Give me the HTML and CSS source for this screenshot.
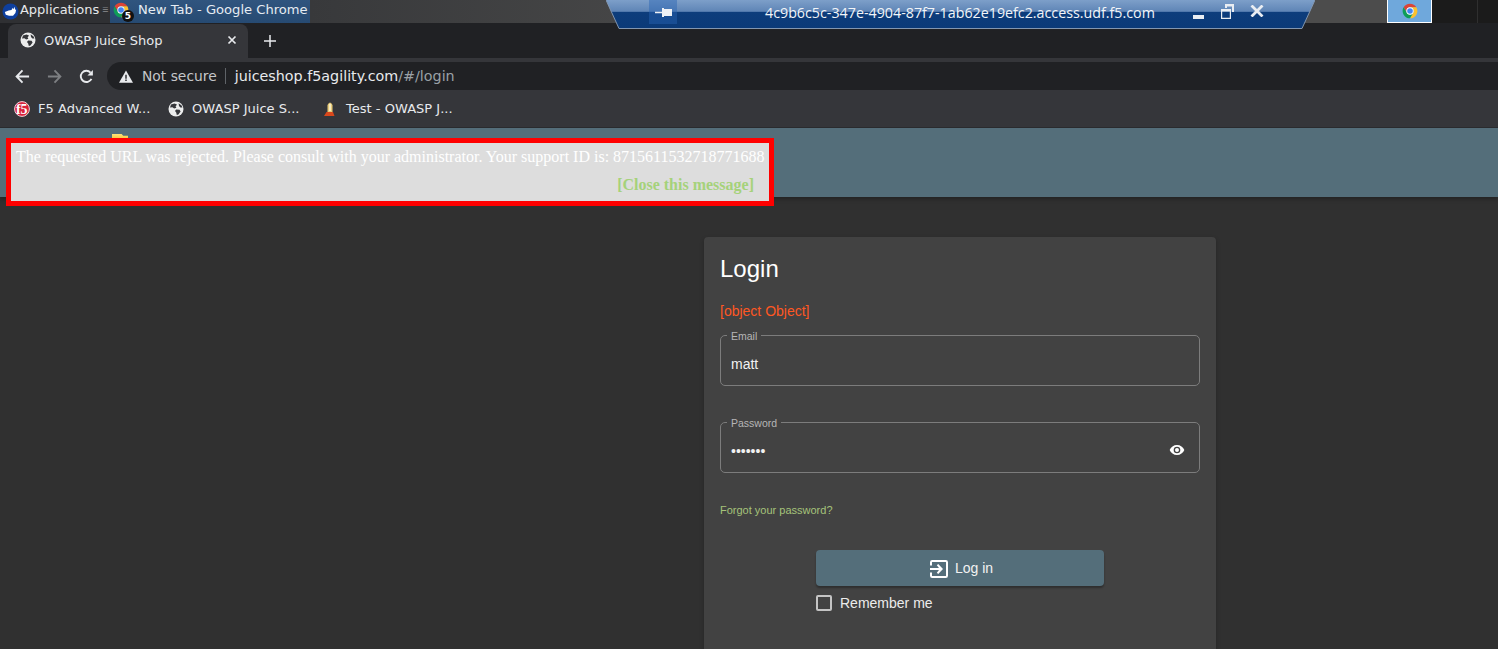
FILE: index.html
```html
<!DOCTYPE html>
<html lang="en">
<head>
<meta charset="utf-8">
<title>OWASP Juice Shop</title>
<link rel="stylesheet" href="styles.css">
</head>
<body>
<svg class="defs" width="0" height="0" aria-hidden="true">
  <defs>
    <symbol id="globe" viewBox="0 0 16 16">
      <circle cx="8" cy="8" r="7.5" fill="#eceded"/>
      <path d="M3 3.500 6.500 2.600 9 3.600 7.600 5.400 8.400 6.800 6.200 7.600 4.400 6.200 2 6.400ZM8.200 8.600 11.600 8.800 12.600 10.600 10.400 13.600 8.800 14 8.200 11.400 7 10ZM10.600 2.200 13.600 4.400 14.400 6.600 12.400 6.600 11 5Z" fill="#35363a"/>
    </symbol>
    <symbol id="chrome" viewBox="0 0 24 24">
      <path d="M2.470 6.500A11 11 0 0 1 21.530 6.500H12A5.500 5.500 0 0 0 7.240 14.750Z" fill="#db4437"/>
      <path d="M21.530 6.500A11 11 0 0 1 12 23L16.760 14.750A5.500 5.500 0 0 0 12 6.500Z" fill="#fbc02d"/>
      <path d="M12 23A11 11 0 0 1 2.470 6.500L7.240 14.750A5.500 5.500 0 0 0 16.760 14.750Z" fill="#0f9d58"/>
      <circle cx="12" cy="12" r="5.500" fill="#fff"/>
      <circle cx="12" cy="12" r="4.200" fill="#4285f4"/>
    </symbol>
  </defs>
</svg>

<header class="taskbar">
  <div class="app-menu">
    <svg class="xfce" viewBox="0 0 18 18" aria-hidden="true">
      <circle cx="9" cy="9" r="8.500" fill="#0e3f9e"/>
      <path d="M3 9.500 7 8l3-.6 1.500-2.400.6 1.600 1.300-2.600.4 3 1.200.2-.8 3.400-2.500 3H7.500L4 12.500Z" fill="#fff"/>
    </svg>
    <span class="app-label">Applications</span>
    <span class="menu-sep">☰</span>
  </div>
  <div class="task-active">
    <span class="task-icon">
      <svg class="task-chrome" aria-hidden="true"><use href="#chrome"/></svg>
      <span class="task-badge">5</span>
    </span>
    <span class="task-label">New Tab - Google Chrome</span>
  </div>
  <div class="task-rest">
    <div class="pinned"><svg class="pinned-chrome" aria-hidden="true"><use href="#chrome"/></svg></div>
    <div class="tray-cell"></div>
    <div class="tray-cell tray-last"></div>
  </div>
</header>

<div class="tabstrip">
  <div class="tab">
    <svg class="favicon" aria-hidden="true"><use href="#globe"/></svg>
    <span class="tab-title">OWASP Juice Shop</span>
    <svg class="tab-close" viewBox="0 0 10 10" aria-hidden="true"><path d="M1.500 1.500 8.500 8.500M8.500 1.500 1.500 8.500" stroke="#e8eaed" stroke-width="1.700"/></svg>
  </div>
  <svg class="tab-new" viewBox="0 0 12 12" aria-hidden="true"><path d="M6 0V12M0 6H12" stroke="#e8eaed" stroke-width="1.500"/></svg>
</div>

<div class="toolbar">
  <svg class="nav-icon" viewBox="0 0 16 16" aria-hidden="true"><path d="M15 8H2M8 1.500 1.700 8 8 14.500" fill="none" stroke="#e8eaed" stroke-width="2"/></svg>
  <svg class="nav-icon" viewBox="0 0 16 16" aria-hidden="true"><path d="M1 8H14M8 1.500 14.300 8 8 14.500" fill="none" stroke="#7d7f82" stroke-width="2"/></svg>
  <svg class="nav-icon" viewBox="0 0 16 16" aria-hidden="true"><path d="M13.300 10.500A6 6 0 1 1 12.300 3.800" fill="none" stroke="#e8eaed" stroke-width="2"/><path d="M14.800 1V6.800H9Z" fill="#e8eaed"/></svg>
  <div class="omnibox">
    <svg class="warn" viewBox="0 0 16 14" aria-hidden="true"><path d="M8 0 16 14H0Z" fill="#e8eaed"/><path d="M7.200 5H8.800V9.500H7.200ZM7.200 10.500H8.800V12H7.200Z" fill="#202124"/></svg>
    <span class="not-secure">Not secure</span>
    <span class="omni-sep"></span>
    <span class="url">juiceshop.f5agility.com<span class="url-path">/#/login</span></span>
  </div>
</div>

<nav class="bookmarks">
  <div class="bookmark">
    <svg class="favicon" viewBox="0 0 16 16" aria-hidden="true">
      <circle cx="8" cy="8" r="7.400" fill="#d8213b" stroke="#f3d5da" stroke-width="1"/>
      <text x="7.800" y="12.500" text-anchor="middle" class="f5-mark">f5</text>
    </svg>
    <span>F5 Advanced W...</span>
  </div>
  <div class="bookmark">
    <svg class="favicon" aria-hidden="true"><use href="#globe"/></svg>
    <span>OWASP Juice S...</span>
  </div>
  <div class="bookmark">
    <svg class="favicon" viewBox="0 0 16 16" aria-hidden="true">
      <path d="M5.500 4Q8 -1 10.500 4V11H5.500Z" fill="#e8cb7a"/>
      <path d="M7 3H9V10H7Z" fill="#f8ecc0"/>
      <path d="M4.500 11H11L12.500 15H2Z" fill="#d9481c"/>
    </svg>
    <span>Test - OWASP J...</span>
  </div>
</nav>

<div class="page">
  <div class="app-header"></div>
  <main class="content">
    <section class="login-card">
      <h1>Login</h1>
      <p class="error">[object Object]</p>
      <div class="field">
        <span class="field-label">Email</span>
        <span class="field-value">matt</span>
      </div>
      <div class="field field-password">
        <span class="field-label">Password</span>
        <span class="field-value">•••••••</span>
        <svg class="eye" viewBox="0 0 24 24" aria-hidden="true"><path d="M12 4.500C7 4.500 2.700 7.600 1 12c1.700 4.400 6 7.500 11 7.500s9.300-3.100 11-7.500c-1.700-4.400-6-7.500-11-7.500ZM12 17a5 5 0 1 1 0-10 5 5 0 0 1 0 10Zm0-8a3 3 0 1 0 0 6 3 3 0 0 0 0-6Z" fill="#fff"/></svg>
      </div>
      <a class="forgot">Forgot your password?</a>
      <div class="actions">
        <button class="login-btn" type="button">
          <svg class="login-icon" viewBox="0 0 18 18" aria-hidden="true"><path d="M1 5.500V2.200C1 1.500 1.500 1 2.200 1H15.800C16.500 1 17 1.500 17 2.200V15.800C17 16.500 16.500 17 15.800 17H2.200C1.500 17 1 16.500 1 15.800V12.500" fill="none" stroke="#fff" stroke-width="2"/><path d="M0 8H9L6.800 5.300 8.200 4 13 9 8.200 14 6.800 12.700 9 10H0Z" fill="#fff"/></svg>
          <span>Log in</span>
        </button>
        <label class="remember">
          <span class="checkbox"></span>
          <span>Remember me</span>
        </label>
      </div>
    </section>
  </main>
</div>

<div class="remote-bar">
  <svg class="remote-shape" viewBox="0 0 709 29" preserveAspectRatio="none" aria-hidden="true">
    <defs>
      <linearGradient id="remote-grad" x1="0" y1="0" x2="0" y2="1">
        <stop offset="0" stop-color="#7d9fc9"/>
        <stop offset=".4" stop-color="#5f85b6"/>
        <stop offset=".42" stop-color="#0d3d7c"/>
        <stop offset="1" stop-color="#0b3a78"/>
      </linearGradient>
    </defs>
    <path d="M0 0H709L696 28.500H13Z" fill="url(#remote-grad)"/>
    <path d="M0 0 13 28.500H696L709 0" fill="none" stroke="#8296b0" stroke-width="1"/>
  </svg>
  <div class="pin">
    <svg viewBox="0 0 17 9" aria-hidden="true"><path d="M0 3.700H7V0H9V1H17V8H9V9H7V5.300H0Z" fill="#eef1f5"/></svg>
  </div>
  <span class="remote-title">4c9b6c5c-347e-4904-87f7-1ab62e19efc2.access.udf.f5.com</span>
  <svg class="rc-min" viewBox="0 0 11 4" aria-hidden="true"><path d="M0 0H11V4H0Z" fill="#e9edf2"/></svg>
  <svg class="rc-restore" viewBox="0 0 13 15" aria-hidden="true"><path d="M4 0H13V8H11V2.500H6V4H4ZM0 5H10V15H0ZM1.200 7.500V13.800H8.800V7.500Z" fill="#e9edf2"/></svg>
  <svg class="rc-close" viewBox="0 0 14 12" aria-hidden="true"><path d="M1.500 .5 12.500 11.500M12.500 .5 1.500 11.500" stroke="#e9edf2" stroke-width="2.800"/></svg>
</div>

<div class="folder-peek"></div>

<aside class="block-msg">
  <p class="block-text">The requested URL was rejected. Please consult with your administrator. Your support ID is: 8715611532718771688</p>
  <p class="block-close">[Close this message]</p>
</aside>
</body>
</html>
```
FILE: styles.css
```css
* { box-sizing: border-box; }
html, body { margin: 0; height: 100%; }
body {
  width: 1498px;
  height: 649px;
  overflow: hidden;
  background: #303030;
  font-family: "DejaVu Sans", sans-serif;
  position: relative;
}
.defs { position: absolute; }

/* desktop panel */
.taskbar {
  height: 23px;
  display: flex;
  background: #2f3033;
  color: #e6e8ea;
  font-size: 13px;
}
.app-menu {
  width: 110px;
  display: flex;
  align-items: center;
  padding: 0 0 4px 2px;
  white-space: nowrap;
}
.xfce { width: 17px; height: 17px; margin: 3px 1px 0 0; flex: none; }
.app-label { letter-spacing: -.02px; }
.menu-sep { margin-left: 3px; color: #8b8d90; font-size: 7px; }
.task-active {
  width: 200px;
  display: flex;
  align-items: center;
  padding-bottom: 4px;
  background: linear-gradient(#30557f, #264a72);
  white-space: nowrap;
  color: #e6ecf2;
}
.task-label { font-size: 13.100px; }
.task-icon { position: relative; width: 28px; height: 19px; flex: none; }
.task-chrome {
  position: absolute;
  left: 3px;
  top: 2px;
  width: 16px;
  height: 16px;
}
.task-badge {
  position: absolute;
  left: 12px;
  top: 10px;
  width: 12px;
  height: 12px;
  border-radius: 50%;
  background: #111;
  color: #fff;
  font-size: 9px;
  font-weight: 700;
  line-height: 12px;
  text-align: center;
}
.task-rest {
  flex: 1;
  display: flex;
  align-items: flex-start;
  justify-content: flex-end;
  height: 23px;
  background: linear-gradient(90deg, #38393b 0, #4c4c4c 40%, #4c4c4c 100%);
}
.pinned {
  width: 45px;
  height: 23px;
  background: #6fa8dc;
  border: 1px solid #fff;
  border-top: 0;
  display: flex;
  align-items: center;
  justify-content: center;
}
.pinned-chrome { width: 16px; height: 16px; }
.tray-cell { width: 46px; height: 23px; background: #1b1b1b; border-right: 1px solid #2f2f2f; }
.tray-last { width: 20px; border-right: 0; }

/* chrome */
.tabstrip {
  height: 35px;
  display: flex;
  align-items: flex-end;
  padding-left: 8px;
  background: #202124;
  color: #e8eaed;
}
.tab {
  width: 240px;
  height: 34px;
  display: flex;
  align-items: center;
  padding: 0 11px 2px 12px;
  background: #35363a;
  border-radius: 8px 8px 0 0;
  font-size: 13px;
}
.favicon { width: 16px; height: 16px; flex: none; }
.tab-title { flex: 1; margin-left: 8px; letter-spacing: -.05px; }
.tab-close { width: 10px; height: 10px; }
.tab-new { width: 12px; height: 12px; margin: 0 0 11px 16px; }

.toolbar {
  height: 32px;
  display: flex;
  align-items: center;
  background: #35363a;
  padding: 4px 0 0 15px;
}
.nav-icon { width: 15px; height: 15px; margin-right: 17px; flex: none; }
.omnibox {
  flex: 1;
  height: 28px;
  margin-left: -4px;
  border-radius: 14px 0 0 14px;
  background: #202124;
  display: flex;
  align-items: center;
  padding-left: 12px;
  color: #e8eaed;
}
.warn { width: 14px; height: 13px; flex: none; }
.not-secure { margin-left: 9px; color: #c4c6c9; font-size: 13.850px; }
.omni-sep { width: 1px; height: 16px; background: #5f6368; margin: 0 9px 0 8px; }
.url { font-size: 14.300px; }
.url-path { color: #9aa0a6; }

.bookmarks {
  height: 38px;
  display: flex;
  align-items: center;
  padding: 0 0 0 14px;
  background: #35363a;
  color: #e8eaed;
  font-size: 13.050px;
  border-bottom: 1px solid #2a2b2e;
}
.bookmark {
  width: 154px;
  display: flex;
  align-items: center;
  gap: 8px;
  white-space: nowrap;
}
.f5-mark {
  font-family: "Liberation Serif", serif;
  font-size: 14px;
  font-weight: 700;
  fill: #fff;
}

/* page */
.page { height: 521px; overflow: hidden; }
.app-header {
  height: 69px;
  background: #546e7a;
  box-shadow: 0 2px 4px rgba(0, 0, 0, .3);
}
.content { padding: 40px 0 0 704px; }
.login-card {
  width: 512px;
  height: 500px;
  padding: 16px;
  background: #424242;
  border-radius: 4px;
  color: #fff;
  font-family: "Liberation Sans", Arial, sans-serif;
  box-shadow: 0 2px 4px rgba(0, 0, 0, .25);
}
h1 {
  margin: 0;
  font-size: 24px;
  font-weight: 400;
  line-height: 32px;
}
.error {
  margin: 18px 0 0;
  height: 32px;
  font-size: 14px;
  line-height: 16px;
  color: #ff5722;
}
.field {
  position: relative;
  height: 51px;
  border: 1px solid #7c7c7c;
  border-radius: 5px;
  display: flex;
  align-items: center;
  padding: 6px 10px 0;
  font-size: 14px;
}
.field-password { margin-top: 36px; }
.field-label {
  position: absolute;
  left: 6px;
  top: -6px;
  padding: 0 4px;
  background: #424242;
  font-size: 10.500px;
  line-height: 12px;
  color: #b6b6b6;
}
.field-value { color: #f1f1f1; }
.eye { width: 16px; height: 16px; margin: -1px 4px 0 auto; }
.forgot {
  display: block;
  margin-top: 31px;
  font-size: 11px;
  line-height: 13px;
  color: #a5c37a;
}
.actions {
  margin: 33px 0 0 96px;
  width: 288px;
}
.login-btn {
  width: 288px;
  height: 36px;
  border: 0;
  border-radius: 4px;
  background: #546e7a;
  color: #f2f2f2;
  font-family: "Liberation Sans", Arial, sans-serif;
  font-size: 14px;
  display: flex;
  align-items: center;
  justify-content: center;
  gap: 7px;
  padding: 0 0 0 3px;
  box-shadow: 0 2px 2px rgba(0, 0, 0, .3);
}
.login-icon { width: 18px; height: 18px; margin-top: 1px; }
.remember {
  display: flex;
  align-items: center;
  gap: 8px;
  margin-top: 9px;
  font-size: 14px;
  color: #ececec;
}
.checkbox {
  width: 16px;
  height: 16px;
  border: 2px solid #c4c4c4;
  border-radius: 2px;
}

/* overlays */
.remote-bar {
  position: absolute;
  left: 606px;
  top: 0;
  width: 709px;
  height: 29px;
  color: #f2f5f8;
}
.remote-shape { position: absolute; inset: 0; width: 100%; height: 100%; }
.pin {
  position: absolute;
  left: 43px;
  top: 0;
  width: 28px;
  height: 24px;
  background: rgba(40, 100, 180, .45);
  display: flex;
  align-items: center;
  justify-content: center;
}
.pin svg { width: 17px; height: 9px; flex: none; }
.remote-title {
  position: absolute;
  left: 159px;
  top: 4px;
  font-family: "Open Sans", sans-serif;
  font-size: 14.270px;
  line-height: 18px;
  white-space: nowrap;
}
.rc-min { position: absolute; left: 587px; top: 15px; width: 11px; height: 4px; }
.rc-restore { position: absolute; left: 615px; top: 4px; width: 13px; height: 15px; }
.rc-close { position: absolute; left: 644px; top: 5px; width: 14px; height: 12px; }

.folder-peek {
  position: absolute;
  left: 112px;
  top: 134px;
  width: 16px;
  height: 6px;
  background: linear-gradient(#ffe27a, #f5c230);
  clip-path: polygon(0 0, 60% 0, 70% 30%, 100% 30%, 100% 100%, 0 100%);
}

.block-msg {
  position: absolute;
  left: 6px;
  top: 138px;
  width: 768px;
  height: 68px;
  border: 5px solid #f00;
  background: #ddd;
  font-family: "Liberation Serif", serif;
  font-size: 16px;
  white-space: nowrap;
}
.block-text {
  margin: 0;
  position: absolute;
  left: 5px;
  top: 5px;
  line-height: 18px;
  color: #fff;
}
.block-close {
  margin: 0;
  position: absolute;
  right: 15px;
  top: 33px;
  line-height: 18px;
  font-weight: 700;
  color: #a5d27a;
}
```
